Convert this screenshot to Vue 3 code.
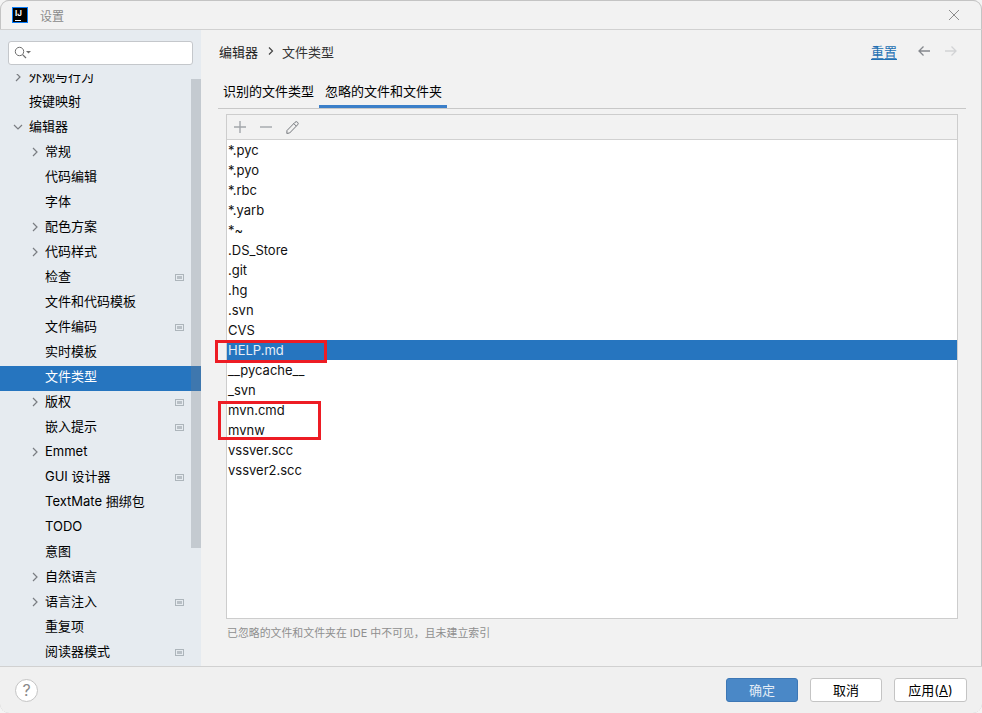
<script setup>
const menu = [
  { t: '外观与行为', l: 0, c: 'r' },
  { t: '按键映射', l: 0 },
  { t: '编辑器', l: 0, c: 'd' },
  { t: '常规', l: 1, c: 'r' },
  { t: '代码编辑', l: 1 },
  { t: '字体', l: 1 },
  { t: '配色方案', l: 1, c: 'r' },
  { t: '代码样式', l: 1, c: 'r' },
  { t: '检查', l: 1, b: true },
  { t: '文件和代码模板', l: 1 },
  { t: '文件编码', l: 1, b: true },
  { t: '实时模板', l: 1 },
  { t: '文件类型', l: 1, s: true },
  { t: '版权', l: 1, c: 'r', b: true },
  { t: '嵌入提示', l: 1, b: true },
  { t: 'Emmet', l: 1, c: 'r' },
  { t: 'GUI 设计器', l: 1, b: true },
  { t: 'TextMate 捆绑包', l: 1 },
  { t: 'TODO', l: 1 },
  { t: '意图', l: 1 },
  { t: '自然语言', l: 1, c: 'r' },
  { t: '语言注入', l: 1, c: 'r', b: true },
  { t: '重复项', l: 1 },
  { t: '阅读器模式', l: 1, b: true }
]
const files = ['*.pyc', '*.pyo', '*.rbc', '*.yarb', '*~', '.DS_Store', '.git', '.hg', '.svn', 'CVS', 'HELP.md', '__pycache__', '_svn', 'mvn.cmd', 'mvnw', 'vssver.scc', 'vssver2.scc']
</script>

<template>
  <div class="window">
    <header class="titlebar">
      <div class="logo"><span class="logo-text">IJ</span><i class="logo-bar"></i></div>
      <span class="title">设置</span>
      <svg class="close" width="12" height="12" viewBox="0 0 12 12"><path d="M1 1l10 10M11 1L1 11" stroke="#8c8c8c" stroke-width="1" fill="none" /></svg>
    </header>

    <div class="main">
      <aside class="sidebar">
        <div class="search">
          <svg width="18" height="14" viewBox="0 0 18 14">
            <circle cx="5.5" cy="5.5" r="4.2" fill="none" stroke="#6e6e6e" stroke-width="1" />
            <path d="M8.6 8.600L12 12" stroke="#6e6e6e" stroke-width="1.2" fill="none" />
            <path d="M12 5h5l-2.500 2.600z" fill="#6e6e6e" />
          </svg>
        </div>
        <div class="tree-wrap">
          <div class="tree">
            <div v-for="m in menu" :key="m.t" class="row" :class="['lv' + m.l, { sel: m.s }]">
              <svg v-if="m.c" class="chev" width="10" height="10" viewBox="0 0 10 10">
                <path v-if="m.c === 'r'" d="M3 1l4 4-4 4" fill="none" stroke="#7a7d82" stroke-width="1.2" />
                <path v-else d="M1 3l4 4 4-4" fill="none" stroke="#7a7d82" stroke-width="1.2" />
              </svg>
              <span class="row-text">{{ m.t }}</span>
              <i v-if="m.b" class="badge"></i>
            </div>
          </div>
          <div class="scroll-thumb"></div>
        </div>
      </aside>

      <section class="content">
        <div class="crumbs">
          <span class="crumb dark">编辑器</span>
          <svg class="crumb-sep" width="8" height="10" viewBox="0 0 8 10"><path d="M2 1.500L5.500 5 2 8.500" fill="none" stroke="#444" stroke-width="1.2" /></svg>
          <span class="crumb">文件类型</span>
          <span class="spacer"></span>
          <a class="reset">重置</a>
          <svg class="arrow" width="14" height="12" viewBox="0 0 14 12"><path d="M13 6H2M6.500 1.500L2 6l4.500 4.500" fill="none" stroke="#85888d" stroke-width="1.3" /></svg>
          <svg class="arrow" width="14" height="12" viewBox="0 0 14 12"><path d="M1 6h11M7.500 1.500L12 6l-4.500 4.500" fill="none" stroke="#d2d3d5" stroke-width="1.3" /></svg>
        </div>

        <nav class="tabs">
          <span class="tab">识别的文件类型</span>
          <span class="tab active">忽略的文件和文件夹</span>
        </nav>

        <div class="panel">
          <div class="toolbar">
            <svg width="14" height="14" viewBox="0 0 14 14"><path d="M7 1v12M1 7h12" stroke="#a3a6ab" stroke-width="1.4" fill="none" /></svg>
            <svg width="14" height="14" viewBox="0 0 14 14"><path d="M1 7h12" stroke="#a3a6ab" stroke-width="1.4" fill="none" /></svg>
            <svg width="15" height="15" viewBox="0 0 15 15"><path d="M2 10.500L10 2.300a1.700 1.700 0 0 1 2.600 2.500L4.600 13 1.800 13.400z M8.800 3.600l2.500 2.500" fill="none" stroke="#75787d" stroke-width="1" /></svg>
          </div>
          <ul class="files">
            <li v-for="f in files" :key="f" :class="{ picked: f === 'HELP.md' }">{{ f }}</li>
          </ul>
        </div>

        <p class="hint">已忽略的文件和文件夹在 IDE 中不可见，且未建立索引</p>
      </section>
    </div>

    <footer class="footer">
      <div class="help">?</div>
      <span class="spacer"></span>
      <button class="btn primary">确定</button>
      <button class="btn">取消</button>
      <button class="btn wide">应用(<u>A</u>)</button>
    </footer>

    <div class="mark mark-a"></div>
    <div class="mark mark-b"></div>
  </div>
</template>

<style>
html, body { margin: 0; background: #f4f4f4; }
</style>

<style scoped>
.window {
  position: relative;
  width: 982px;
  height: 713px;
  box-sizing: border-box;
  display: flex;
  flex-direction: column;
  background: #f2f2f2;
  border-radius: 9px;
  box-shadow: inset 0 0 0 1px #c4c4c4;
  overflow: hidden;
  font-family: "Inter", "Noto Sans CJK SC", sans-serif;
  font-size: 13px;
  color: #000;
}
.titlebar {
  flex: none;
  display: flex;
  align-items: center;
  padding: 0 22px 0 12px;
  border-bottom: 1px solid #d1d1d1;
  border-top: 1px solid #c4c4c4;
  box-sizing: border-box;
  height: 30px;
}
.logo {
  position: relative;
  width: 16px;
  height: 16px;
  box-sizing: border-box;
  background: #000;
  border: 1px solid #087cfa;
  flex: none;
}
.logo-text {
  position: absolute;
  left: 2px;
  top: 0;
  font-size: 8px;
  line-height: 10px;
  font-weight: 700;
  color: #fff;
}
.logo-bar { position: absolute; left: 2px; bottom: 1px; width: 6px; height: 1px; background: #fff; }
.title { margin-left: 12px; color: #8a8a8a; font-size: 12px; }
.close { margin-left: auto; }
.main { flex: 1; display: flex; min-height: 0; }
.sidebar {
  flex: none;
  width: 201px;
  background: #e6ebf0;
  display: flex;
  flex-direction: column;
}
.search {
  flex: none;
  margin: 11px 8px 0 8px;
  height: 24px;
  box-sizing: border-box;
  background: #fff;
  border: 1px solid #c4c7cb;
  border-radius: 3px;
  padding: 4px 0 0 5px;
  display: flex;
}
.tree-wrap { position: relative; flex: 1; margin-top: 9px; overflow: hidden; }
.tree { margin-top: -8px; }
.row {
  position: relative;
  height: 25px;
  line-height: 21.500px;
  white-space: nowrap;
}
.row.lv0 .row-text { margin-left: 29px; }
.row.lv1 .row-text { margin-left: 45px; }
.row.sel { background: #2675bf; color: #fff; }
.chev { position: absolute; top: 6px; }
.row.lv0 .chev { left: 13px; }
.row.lv1 .chev { left: 30px; }
.badge {
  position: absolute;
  left: 175px;
  top: 8px;
  width: 7px;
  height: 5px;
  border: 1px solid #adb5bb;
  background: linear-gradient(#b9c0c6, #b9c0c6) center / 5px 3px no-repeat;
}
.scroll-thumb {
  position: absolute;
  right: 0;
  top: 5px;
  width: 10px;
  height: 469px;
  background: rgba(120, 125, 135, 0.3);
}
.content {
  flex: 1;
  min-width: 0;
  display: flex;
  flex-direction: column;
  padding: 0 16px 0 17px;
}
.crumbs {
  flex: none;
  height: 44px;
  display: flex;
  align-items: center;
  padding: 0 8px 2px 1px;
  box-sizing: border-box;
}
.crumb { color: #333; }
.crumb.dark { color: #222; }
.crumb-sep { margin: 0 7px 0 9px; }
.spacer { flex: 1; }
.reset { color: #2470b3; text-decoration: underline; text-underline-offset: 2px; margin-right: 20px; }
.arrow + .arrow { margin-left: 13px; }
.tabs {
  flex: none;
  margin-top: 6px;
  display: flex;
  border-bottom: 1px solid #c8c8c8;
  height: 28px;
}
.tab {
  box-sizing: border-box;
  padding: 0 5px;
  line-height: 22px;
  height: 28px;
}
.tab.active { border-bottom: 3px solid #3b7fc9; padding-left: 6px; }
.panel {
  flex: none;
  margin: 5px 8px 0 8px;
  height: 505px;
  box-sizing: border-box;
  border: 1px solid #cdcdcd;
  background: #fff;
  display: flex;
  flex-direction: column;
}
.toolbar {
  flex: none;
  height: 25px;
  box-sizing: border-box;
  background: #f2f2f2;
  border-bottom: 1px solid #d1d1d1;
  display: flex;
  align-items: center;
  gap: 12px;
  padding-left: 6px;
}
.files { list-style: none; margin: 0; padding: 0; }
.files li {
  height: 20px;
  line-height: 21px;
  padding-left: 1px;
  color: #111;
}
.files li.picked { background: #2675bf; color: #e8eef6; }
.hint { margin: 7px 0 0 9px; font-size: 10.9px; line-height: 14px; color: #8f8f8f; }
.footer {
  flex: none;
  height: 47px;
  box-sizing: border-box;
  border-top: 1px solid #d1d1d1;
  display: flex;
  align-items: center;
  padding: 0 15px;
  background: #f0f0f0;
}
.help {
  width: 23px;
  height: 23px;
  box-sizing: border-box;
  border: 1px solid #c4c4c4;
  border-radius: 50%;
  background: #fff;
  color: #8a8a8a;
  text-align: center;
  font-size: 16px;
  line-height: 21px;
}
.btn {
  width: 72px;
  height: 24px;
  box-sizing: border-box;
  margin: 0 0 0 12px;
  padding: 0 0 2px;
  background: #fff;
  border: 1px solid #c4c4c4;
  border-radius: 3px;
  font: inherit;
  color: #000;
}
.btn.primary { background: #4a88c7; border-color: #3d77b5; color: #e3ecf6; margin-left: 0; }
.btn.wide { width: 73px; }
.mark { position: absolute; border: 3px solid #ed1c24; box-sizing: border-box; pointer-events: none; }
.mark-a { left: 215px; top: 340px; width: 112px; height: 23px; }
.mark-b { left: 218px; top: 401px; width: 103px; height: 39px; }
</style>
